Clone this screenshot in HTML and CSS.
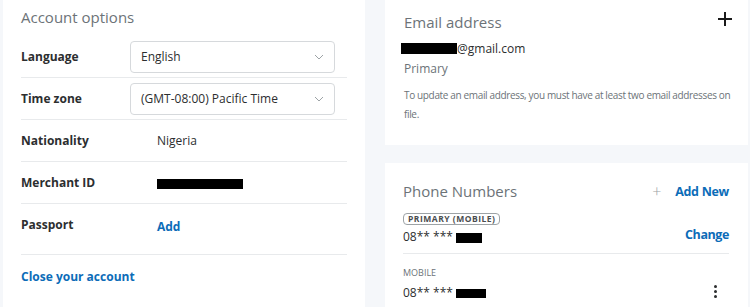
FILE: index.html
```html
<!DOCTYPE html>
<html lang="en">
  <head>
    <meta charset="UTF-8" />
    <meta name="viewport" content="width=device-width, initial-scale=1.0" />
    <title>Account settings</title>
    <link rel="stylesheet" href="styles.css">
  </head>
  <body>
    <div class="page">
      <section class="card options">
        <h2 class="card-title">Account options</h2>
        <div class="row">
          <span class="label">Language</span>
          <div class="select">
            <span>English</span>
            <svg class="chev" width="10" height="6" viewBox="0 0 10 6"><path d="M1 1l4 4 4-4" fill="none" stroke="#9da3a6" stroke-width="1"/></svg>
          </div>
        </div>
        <div class="row">
          <span class="label">Time zone</span>
          <div class="select">
            <span>(GMT-08:00) Pacific Time</span>
            <svg class="chev" width="10" height="6" viewBox="0 0 10 6"><path d="M1 1l4 4 4-4" fill="none" stroke="#9da3a6" stroke-width="1"/></svg>
          </div>
        </div>
        <div class="row">
          <span class="label">Nationality</span>
          <span class="value">Nigeria</span>
        </div>
        <div class="row">
          <span class="label">Merchant ID</span>
          <span class="value"><span class="redact merchant"></span></span>
        </div>
        <div class="row tall">
          <span class="label">Passport</span>
          <a class="value link" href="#">Add</a>
        </div>
        <a class="link close" href="#">Close your account</a>
      </section>

      <div class="side">
        <section class="card email">
          <div class="card-head">
            <h2 class="card-title">Email address</h2>
            <svg class="plus" width="16" height="16" viewBox="0 0 16 16"><path d="M8 1v14M1 8h14" stroke="#1a1a1a" stroke-width="2"/></svg>
          </div>
          <div class="email-addr"><span class="redact mail"></span>@gmail.com</div>
          <div class="muted">Primary</div>
          <p class="note">To update an email address, you must have at least two email addresses on file.</p>
        </section>

        <section class="card phones">
          <div class="card-head">
            <h2 class="card-title">Phone Numbers</h2>
            <a class="link add-new" href="#"><span class="thin-plus">+</span>Add New</a>
          </div>
          <div class="phone first">
            <div>
              <span class="badge">PRIMARY (MOBILE)</span>
              <div class="number">08** *** <span class="redact num"></span></div>
            </div>
            <a class="link change" href="#">Change</a>
          </div>
          <div class="phone second">
            <div>
              <div class="kind">MOBILE</div>
              <div class="number">08** *** <span class="redact num2"></span></div>
            </div>
            <span class="kebab"><i></i><i></i><i></i></span>
          </div>
        </section>
      </div>
    </div>
  </body>
</html>
```

FILE: styles.css
```css
body {
  margin: 0;
  background: #f5f7fa;
  font-family: "Open Sans", sans-serif;
  color: #2c2e2f;
  overflow: hidden;
}

.page {
  display: flex;
  gap: 20px;
  padding-left: 3px;
  height: 307px;
}

.card {
  background: #ffffff;
}

.card-title {
  margin: 0;
  font-size: 15px;
  font-weight: 400;
  color: #6c7378;
}

a {
  text-decoration: none;
}

.link {
  color: #0c6cb8;
  font-weight: 700;
}

/* left column */
.options {
  width: 326px;
  padding: 7px 18px 0;
}

.row {
  display: flex;
  align-items: center;
  min-height: 41px;
  border-bottom: 1px solid #e8eaec;
  font-size: 12px;
}

.row:first-of-type {
  margin-top: 9px;
}

.row.tall {
  padding-bottom: 9px;
}

.label {
  width: 109px;
  font-weight: 700;
  color: #2c2e2f;
}

.value {
  padding-left: 27px;
  color: #2c2e2f;
}

.row .link {
  color: #0c6cb8;
  font-size: 12px;
  padding-top: 3px;
}

.select {
  display: flex;
  align-items: center;
  justify-content: space-between;
  width: 183px;
  height: 30px;
  padding: 0 10px;
  border: 1px solid #d6d9dc;
  border-radius: 4px;
  color: #2c2e2f;
}

.redact {
  display: inline-block;
  background: #000;
  vertical-align: middle;
}

.merchant {
  width: 86px;
  height: 10px;
}

.close {
  display: block;
  margin-top: 13px;
  font-size: 12px;
}

/* right column */
.side {
  display: flex;
  flex-direction: column;
  gap: 18px;
  width: 363px;
}

.card-head {
  display: flex;
  justify-content: space-between;
  align-items: center;
}

.email {
  height: 133px;
  padding: 12px 15px 0 19px;
}

.plus {
  margin-top: -6px;
}

.email-addr {
  margin-top: 8px;
  margin-left: -3px;
  font-size: 12px;
  color: #2c2e2f;
}

.mail {
  width: 56px;
  height: 11px;
  vertical-align: -1px;
}

.muted {
  margin-top: 3px;
  font-size: 12px;
  color: #6c7378;
}

.note {
  margin: 9px 0 0;
  font-size: 10px;
  letter-spacing: -0.35px;
  line-height: 19px;
  color: #6c7378;
}

.phones {
  flex: 1;
  padding: 17px 19px 0 18px;
}

.add-new {
  display: flex;
  align-items: center;
  font-size: 12.5px;
  letter-spacing: -0.3px;
}

.thin-plus {
  font-weight: 300;
  font-size: 16px;
  color: #9da3a6;
  margin-right: 14px;
}

.phone {
  display: flex;
  justify-content: space-between;
  align-items: flex-end;
}

.phone.first {
  margin-top: 3px;
  padding-bottom: 8px;
  border-bottom: 1px solid #e8eaec;
}

.badge {
  display: inline-block;
  padding: 0 4px;
  border: 1px solid #9da3a6;
  border-radius: 4px;
  font-size: 8.5px;
  font-weight: 700;
  letter-spacing: 0.5px;
  line-height: 10px;
  color: #4a4d4f;
}

.number {
  margin-top: 1px;
  font-size: 12px;
  color: #2c2e2f;
}

.second .number {
  margin-top: 5px;
}

.num {
  width: 26px;
  height: 10px;
}

.num2 {
  width: 30px;
  height: 9px;
}

.change {
  font-size: 12.5px;
  letter-spacing: -0.4px;
  margin-bottom: 2px;
}

.kind {
  margin-top: 12px;
  font-size: 9px;
  color: #6c7378;
}

.kebab {
  display: flex;
  flex-direction: column;
  gap: 2px;
  margin-right: 12px;
  margin-bottom: 3px;
}

.kebab i {
  width: 3px;
  height: 3px;
  border-radius: 50%;
  background: #2c2e2f;
}
```
